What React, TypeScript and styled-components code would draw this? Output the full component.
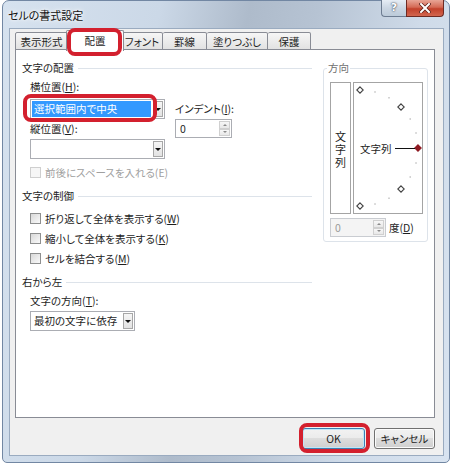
import React from "react";
import styled, { createGlobalStyle } from "styled-components";

const GlobalStyle = createGlobalStyle`
  html, body {
    margin: 0;
    padding: 0;
    background: #fff;
  }
  body {
    font-family: "Noto Sans CJK JP", "Noto Sans", sans-serif;
    font-size: 10.5px;
    color: #1e1e1e;
    font-feature-settings: "palt";
  }
`;

const Screen = styled.div`
  width: 450px;
  height: 465px;
  overflow: hidden;
  background: #fff;
  padding-left: 2px;
  box-sizing: border-box;
`;

const Window = styled.div`
  width: 448px;
  height: 463px;
  box-sizing: border-box;
  border: 1px solid #7287a3;
  border-radius: 7px 7px 5px 5px;
  background:
    linear-gradient(100deg, #d6e2ef 0%, #cbd8e7 30%, #aebbcb 47%, #b6c3d3 60%, #cfdbe9 80%, #d8e3f0 100%);
  display: flex;
  flex-direction: column;
  padding: 0 5px 6px 6px;
`;

const TitleBar = styled.div`
  height: 27px;
  display: flex;
  align-items: flex-start;
`;

const Title = styled.div`
  font-size: 11px;
  line-height: 28px;
  color: #111;
  margin-left: -1px;
  text-shadow: 0 0 6px #fff, 0 0 3px #fff;
`;

const Caption = styled.div`
  margin-left: auto;
  margin-top: -1px;
  display: flex;
`;

const HelpButton = styled.div`
  width: 25px;
  height: 17px;
  box-sizing: border-box;
  border: 1px solid #6d7c91;
  border-top: none;
  border-right: none;
  border-radius: 0 0 0 4px;
  background: linear-gradient(#e6edf5, #cbd6e3 50%, #bccad9);
  color: #fff;
  font-family: "DejaVu Sans", sans-serif;
  font-weight: bold;
  font-size: 11px;
  line-height: 16px;
  text-align: center;
  text-shadow: 0 0 1px #404a58, 0 0 2px #404a58;
`;

const CloseButton = styled.div`
  width: 38px;
  height: 17px;
  box-sizing: border-box;
  border: 1px solid #6e2a22;
  border-top: none;
  border-radius: 0 0 4px 0;
  background: linear-gradient(#e8a596, #d46a55 45%, #c2412b 55%, #d2664f);
  display: flex;
  align-items: center;
  justify-content: center;
`;

const Body = styled.div`
  flex: 1;
  background: #f0f0f0;
  border: 1px solid #9aabc0;
  display: flex;
  flex-direction: column;
  padding: 3px 8px 0 5px;
  min-height: 0;
`;

const TabRow = styled.div`
  display: flex;
  align-items: flex-end;
  height: 18px;
  position: relative;
  z-index: 1;
`;

const Tab = styled.div<{ $w: number; $active?: boolean }>`
  position: relative;
  box-sizing: border-box;
  width: ${(p) => p.$w + (p.$active ? 4 : 0)}px;
  height: ${(p) => (p.$active ? 21 : 18)}px;
  margin: ${(p) => (p.$active ? "0 -2px -1px" : "0")};
  z-index: ${(p) => (p.$active ? 2 : 1)};
  border: 1px solid #898c95;
  border-bottom: ${(p) => (p.$active ? "none" : "1px solid #898c95")};
  border-left-width: ${(p) => (p.$active ? 1 : 0)}px;
  border-radius: 2px 2px 0 0;
  background: ${(p) =>
    p.$active ? "#fff" : "linear-gradient(#f6f6f6, #ececec 50%, #e2e2e2)"};
  text-align: center;
  line-height: ${(p) => (p.$active ? 19 : 17)}px;
  color: #1e1e1e;

  &:first-child {
    border-left-width: 1px;
  }
`;

const RedMark = styled.div<{ $t: number; $r: number; $b: number; $l: number }>`
  position: absolute;
  top: ${(p) => p.$t}px;
  right: ${(p) => p.$r}px;
  bottom: ${(p) => p.$b}px;
  left: ${(p) => p.$l}px;
  border: 4px solid #d3202e;
  border-radius: 8px;
  pointer-events: none;
  z-index: 5;
`;

const Panel = styled.div`
  flex: 1;
  background: #fff;
  border: 1px solid #898c95;
  display: flex;
  align-items: flex-start;
  gap: 11px;
  padding: 11px 6px 0 6px;
  margin-top: -1px;
`;

const LeftColumn = styled.div`
  width: 290px;
  display: flex;
  flex-direction: column;
`;

const GroupHeader = styled.div<{ $mt?: number }>`
  display: flex;
  align-items: center;
  gap: 4px;
  height: 14px;
  line-height: 14px;
  margin-top: ${(p) => p.$mt ?? 0}px;

  &::after {
    content: "";
    flex: 1;
    height: 1px;
    background: #dde3ea;
  }
`;

const GroupBody = styled.div`
  padding-left: 8px;
  display: flex;
  flex-direction: column;
`;

const Label = styled.div<{ $mt?: number; $disabled?: boolean }>`
  height: 14px;
  line-height: 14px;
  margin-top: ${(p) => p.$mt ?? 0}px;
  color: ${(p) => (p.$disabled ? "#a0a0a0" : "#1e1e1e")};
  white-space: nowrap;
`;

const U = styled.span`
  text-decoration: underline;
  text-underline-offset: 1px;
`;

const AlignRow = styled.div`
  display: flex;
  gap: 10px;
  margin-top: 5px;
`;

const SubColumn = styled.div<{ $mt?: number; $w?: number }>`
  display: flex;
  flex-direction: column;
  margin-top: ${(p) => p.$mt ?? 0}px;
  width: ${(p) => (p.$w ? `${p.$w}px` : "auto")};
`;

const Combo = styled.div<{ $w: number; $mt?: number }>`
  position: relative;
  width: ${(p) => p.$w}px;
  height: 20px;
  box-sizing: border-box;
  margin-top: ${(p) => p.$mt ?? 0}px;
  border: 1px solid #abadb3;
  background: #fff;
  display: flex;
  padding: 1px;
`;

const ComboText = styled.div<{ $selected?: boolean }>`
  flex: 1;
  line-height: 16px;
  padding-left: 2px;
  margin-right: 2px;
  white-space: nowrap;
  background: ${(p) => (p.$selected ? "#3399ff" : "transparent")};
  color: ${(p) => (p.$selected ? "#fff" : "#1e1e1e")};
`;

const DropButton = styled.div`
  width: 10px;
  box-sizing: border-box;
  border: 1px solid #a7a7a7;
  background: linear-gradient(#f6f6f6, #e2e2e2);
  display: flex;
  align-items: center;
  justify-content: center;

  &::after {
    content: "";
    border-left: 3px solid transparent;
    border-right: 3px solid transparent;
    border-top: 3px solid #111;
  }
`;

const Spin = styled.div<{ $w: number; $disabled?: boolean; $mt?: number }>`
  width: ${(p) => p.$w}px;
  height: 19px;
  box-sizing: border-box;
  margin-top: ${(p) => p.$mt ?? 0}px;
  border: 1px solid ${(p) => (p.$disabled ? "#c9ccd1" : "#abadb3")};
  background: ${(p) => (p.$disabled ? "#f4f4f4" : "#fff")};
  display: flex;
  padding: 1px;
`;

const SpinValue = styled.div<{ $disabled?: boolean }>`
  flex: 1;
  line-height: 15px;
  padding-left: 3px;
  color: ${(p) => (p.$disabled ? "#9a9a9a" : "#1e1e1e")};
`;

const SpinButtons = styled.div`
  width: 11px;
  display: flex;
  flex-direction: column;
`;

const SpinHalf = styled.div<{ $up?: boolean }>`
  flex: 1;
  box-sizing: border-box;
  border: 1px solid #d0d0d0;
  background: linear-gradient(#f7f7f7, #e8e8e8);
  display: flex;
  align-items: center;
  justify-content: center;

  &::after {
    content: "";
    border-left: 2.5px solid transparent;
    border-right: 2.5px solid transparent;
    ${(p) =>
      p.$up ? "border-bottom: 2.5px solid #8a8a8a;" : "border-top: 2.5px solid #8a8a8a;"}
  }
`;

const CheckRow = styled.div<{ $mt?: number; $h?: number; $disabled?: boolean }>`
  display: flex;
  align-items: center;
  height: ${(p) => p.$h ?? 20}px;
  margin-top: ${(p) => p.$mt ?? 0}px;
  color: ${(p) => (p.$disabled ? "#a0a0a0" : "#1e1e1e")};
  white-space: nowrap;
`;

const Check = styled.span<{ $disabled?: boolean }>`
  width: 11px;
  height: 11px;
  box-sizing: border-box;
  flex: none;
  margin-right: 4px;
  border: 1px solid ${(p) => (p.$disabled ? "#cfcfcf" : "#8e8f8f")};
  background: ${(p) =>
    p.$disabled ? "#f6f6f6" : "linear-gradient(135deg, #d8d8d8, #fafafa)"};
`;

const OrientGroup = styled.fieldset`
  width: 105px;
  box-sizing: border-box;
  margin: 0;
  padding: 7px 4px 4px 6px;
  border: 1px solid #dde3ea;
  border-radius: 3px;
  min-width: 0;
`;

const Legend = styled.legend`
  padding: 0 1px;
  margin-left: -3px;
  height: 14px;
  line-height: 14px;
  color: #707070;
`;

const OrientRow = styled.div`
  display: flex;
  gap: 2px;
`;

const VerticalBox = styled.div`
  width: 21px;
  height: 132px;
  box-sizing: border-box;
  border: 1px solid #a4a4a4;
  display: flex;
  align-items: center;
  justify-content: center;
  writing-mode: vertical-rl;
  text-orientation: upright;
  letter-spacing: 2px;
  font-size: 11px;
  padding-top: 4px;
`;

const DialBox = styled.div`
  width: 70px;
  height: 132px;
  box-sizing: border-box;
  border: 1px solid #a4a4a4;
  display: flex;
`;

const DegreeRow = styled.div`
  display: flex;
  align-items: center;
  gap: 3px;
  margin-top: 4px;
`;

const Footer = styled.div`
  height: 37px;
  display: flex;
  justify-content: flex-end;
  align-items: flex-start;
  gap: 9px;
  padding-top: 10px;
  box-sizing: border-box;
`;

const Button = styled.button<{ $w: number; $default?: boolean }>`
  position: relative;
  width: ${(p) => p.$w}px;
  height: 21px;
  padding: 0;
  border: 1px solid ${(p) => (p.$default ? "#3c7fb1" : "#707070")};
  border-radius: 3px;
  background: linear-gradient(#f2f2f2 0%, #ebebeb 49%, #dddddd 50%, #cfcfcf 100%);
  box-shadow: ${(p) => (p.$default ? "inset 0 0 0 1px #bfe6f7" : "inset 0 0 0 1px #fbfbfb")};
  font: inherit;
  font-size: 10.5px;
  color: #1e1e1e;
  line-height: 19px;
`;

const diamonds = [90, 45, 0, -45, -90];
const dots = [75, 60, 30, 15, -15, -30, -60, -75];

const Dial = () => {
  const cx = 6;
  const cy = 65;
  const r = 58;
  const pt = (deg: number, rad: number) => {
    const a = (deg * Math.PI) / 180;
    return [cx + rad * Math.cos(a), cy - rad * Math.sin(a)];
  };
  return (
    <svg width="68" height="130" viewBox="0 0 68 130">
      {dots.map((d) => {
        const [x, y] = pt(d, r);
        return <rect key={d} x={x - 0.75} y={y - 0.75} width="1.5" height="1.5" fill="#c4c4c4" />;
      })}
      {diamonds.map((d) => {
        const [x, y] = pt(d, r);
        const red = d === 0;
        return (
          <path
            key={d}
            d={`M${x} ${y - 3.2} L${x + 3.2} ${y} L${x} ${y + 3.2} L${x - 3.2} ${y} Z`}
            fill={red ? "#8e1a22" : "#fff"}
            stroke={red ? "#8e1a22" : "#444"}
            strokeWidth="1.1"
          />
        );
      })}
      <line x1="41" y1="65.5" x2="61" y2="65.5" stroke="#111" strokeWidth="1" />
      <text x="6" y="69.5" fontSize="10.5" fill="#1e1e1e" fontFamily='"Noto Sans CJK JP", sans-serif'>
        文字列
      </text>
    </svg>
  );
};

const tabs = [
  { label: "表示形式", w: 53 },
  { label: "配置", w: 54, active: true },
  { label: "フォント", w: 41 },
  { label: "罫線", w: 44 },
  { label: "塗りつぶし", w: 61 },
  { label: "保護", w: 43 },
];

export default function App() {
  return (
    <>
      <GlobalStyle />
      <Screen>
        <Window>
          <TitleBar>
            <Title>セルの書式設定</Title>
            <Caption>
              <HelpButton>?</HelpButton>
              <CloseButton>
                <svg width="12" height="10" viewBox="0 0 12 10">
                  <path d="M2 1 L10 9 M10 1 L2 9" stroke="#5a1d16" strokeWidth="3.4" strokeLinecap="square" />
                  <path d="M2 1 L10 9 M10 1 L2 9" stroke="#fff" strokeWidth="2" strokeLinecap="square" />
                </svg>
              </CloseButton>
            </Caption>
          </TitleBar>
          <Body>
            <TabRow>
              {tabs.map((t) => (
                <Tab key={t.label} $w={t.w} $active={t.active}>
                  {t.label}
                  {t.active && <RedMark $t={-3} $r={1} $b={-5} $l={0} />}
                </Tab>
              ))}
            </TabRow>
            <Panel>
              <LeftColumn>
                <GroupHeader>文字の配置</GroupHeader>
                <GroupBody>
                  <AlignRow>
                    <SubColumn $w={135}>
                      <Label>
                        横位置(<U>H</U>):
                      </Label>
                      <Combo $w={135} $mt={5}>
                        <ComboText $selected>選択範囲内で中央</ComboText>
                        <DropButton />
                        <RedMark $t={-6} $r={7} $b={-4} $l={-8} />
                      </Combo>
                      <Label $mt={3}>
                        縦位置(<U>V</U>):
                      </Label>
                      <Combo $w={135} $mt={3}>
                        <ComboText />
                        <DropButton />
                      </Combo>
                    </SubColumn>
                    <SubColumn $mt={22}>
                      <Label>
                        インデント(<U>I</U>):
                      </Label>
                      <Spin $w={57} $mt={3}>
                        <SpinValue>0</SpinValue>
                        <SpinButtons>
                          <SpinHalf $up />
                          <SpinHalf />
                        </SpinButtons>
                      </Spin>
                    </SubColumn>
                  </AlignRow>
                  <CheckRow $mt={6} $h={14} $disabled>
                    <Check $disabled />
                    前後にスペースを入れる(E)
                  </CheckRow>
                </GroupBody>

                <GroupHeader $mt={10}>文字の制御</GroupHeader>
                <GroupBody>
                  <CheckRow $mt={5}>
                    <Check />
                    折り返して全体を表示する(<U>W</U>)
                  </CheckRow>
                  <CheckRow>
                    <Check />
                    縮小して全体を表示する(<U>K</U>)
                  </CheckRow>
                  <CheckRow>
                    <Check />
                    セルを結合する(<U>M</U>)
                  </CheckRow>
                </GroupBody>

                <GroupHeader $mt={7}>右から左</GroupHeader>
                <GroupBody>
                  <Label $mt={5}>
                    文字の方向(<U>T</U>):
                  </Label>
                  <Combo $w={105} $mt={3}>
                    <ComboText>最初の文字に依存</ComboText>
                    <DropButton />
                  </Combo>
                </GroupBody>
              </LeftColumn>

              <OrientGroup>
                <Legend>方向</Legend>
                <OrientRow>
                  <VerticalBox>文字列</VerticalBox>
                  <DialBox>
                    <Dial />
                  </DialBox>
                </OrientRow>
                <DegreeRow>
                  <Spin $w={56} $disabled>
                    <SpinValue $disabled>0</SpinValue>
                    <SpinButtons>
                      <SpinHalf $up />
                      <SpinHalf />
                    </SpinButtons>
                  </Spin>
                  <span>
                    度(<U>D</U>)
                  </span>
                </DegreeRow>
              </OrientGroup>
            </Panel>
            <Footer>
              <Button $w={63} $default>
                OK
                <RedMark $t={-6} $r={-6} $b={-5} $l={-4} />
              </Button>
              <Button $w={61}>キャンセル</Button>
            </Footer>
          </Body>
        </Window>
      </Screen>
    </>
  );
}
